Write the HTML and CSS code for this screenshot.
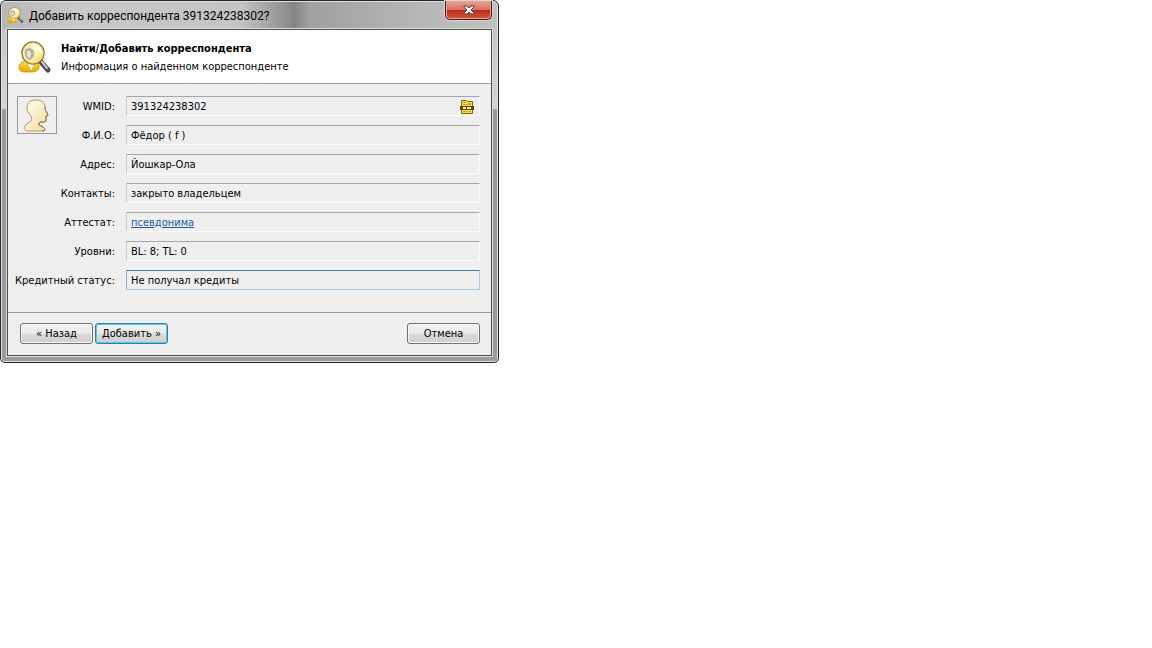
FILE: index.html
```html
<!DOCTYPE html>
<html lang="ru">
<head>
<meta charset="utf-8">
<title>Добавить корреспондента</title>
<link rel="stylesheet" href="styles.css">
</head>
<body>
<svg class="defs" width="0" height="0" aria-hidden="true">
  <defs>
    <linearGradient id="lens" x1="0" y1="0" x2="1" y2="1">
      <stop offset="0" stop-color="#e9dd92"/><stop offset=".45" stop-color="#fffbd8"/><stop offset="1" stop-color="#f1d23c"/>
    </linearGradient>
    <linearGradient id="gold" x1="0" y1="0" x2="0" y2="1">
      <stop offset="0" stop-color="#ffe66b"/><stop offset="1" stop-color="#e2a900"/>
    </linearGradient>
    <linearGradient id="cream" x1="0" y1="0" x2="1" y2="1">
      <stop offset="0" stop-color="#fffdf2"/><stop offset="1" stop-color="#f6dda0"/>
    </linearGradient>
    <symbol id="search-user" viewBox="0 0 34 34">
      <path d="M1 27c0-4 2-5 5-7l3-2h9c2 3 3 5 3 8 0 4-4 5-10 5S1 31 1 27z" fill="url(#gold)" stroke="#d39e0c"/>
      <path d="M10 22l3 7 4-6z" fill="#fffbe8"/>
      <path d="M23 21l7 8" stroke="#4e4e4e" stroke-width="5" stroke-linecap="round"/>
      <path d="M24 21l5 6" stroke="#c9c9c9" stroke-width="2" stroke-linecap="round"/>
      <circle cx="15" cy="12" r="11" fill="url(#lens)" stroke="#8e7930" stroke-width="1.5"/>
      <circle cx="15" cy="12" r="10" fill="none" stroke="#f5e58b"/>
      <path d="M7 9c3-3 8-2 9 1 1 4-1 8-5 9-3-1-5-5-4-10z" fill="#a3a38b" opacity=".8"/>
      <path d="M9 10c2-1 4 0 4 3 0 2-1 4-2 4-2-1-3-4-2-7z" fill="#e6e6d6"/>
      <path d="M14 4c5 0 8 3 9 7" fill="none" stroke="#fff" stroke-width="2" stroke-linecap="round"/>
    </symbol>
  </defs>
</svg>
<main class="window">
  <header class="titlebar">
    <svg class="title-icon" aria-hidden="true"><use href="#search-user"/></svg>
    <h1 class="title">Добавить корреспондента 391324238302?</h1>
    <button class="close" type="button" aria-label="Закрыть">
      <svg class="close-icon" viewBox="0 0 12 10" aria-hidden="true"><path d="M1 1h3l2 2 2-2h3v1L8 5l3 3v1H8L6 7 4 9H1V8l3-3-3-3z" fill="#fff" stroke="#5d3838"/></svg>
    </button>
  </header>
  <form class="client">
    <div class="banner">
      <svg class="banner-icon" aria-hidden="true"><use href="#search-user"/></svg>
      <div class="banner-text">
        <h2 class="heading">Найти/Добавить корреспондента</h2>
        <p class="subheading">Информация о найденном корреспонденте</p>
      </div>
    </div>
    <div class="details">
      <div class="avatar">
        <svg class="avatar-icon" viewBox="0 0 30 34" aria-hidden="true"><path d="M5 10C5 4 9 2 14 2s9 2 9 7c0 2 0 3 1 4l2 4c0 1-2 1-2 1v4c0 2-1 2-3 2h-2c-2 0-2 1-2 3l4 2c3 2 2 4-1 4H6c-4 0-4-3-3-5 1-3 5-3 6-5s1-4-1-6c-2-2-3-4-3-7z" fill="url(#cream)" stroke="#b39a63"/><path d="M23 9c0 2 0 3 1 4l2 4c0 1-2 1-2 1v4c0 2-1 2-3 2h-2c-2 0-2 1-2 3l4 2c3 2 2 4-1 4" fill="none" stroke="#83714a"/></svg>
      </div>
      <div class="fields">
        <label class="label" for="wmid">WMID:</label>
        <div class="field">
          <input class="value" id="wmid" type="text" value="391324238302" readonly>
          <button class="card" type="button" aria-label="Карточка">
            <svg class="card-icon" viewBox="0 0 16 16" aria-hidden="true">
              <path d="M2.500 1.500h5l1 1h5v12h-11z" fill="#f4dc45" stroke="#80680c"/>
              <path d="M4 3.500h3M9 4.500h3M4 5.500h8M4 12.500h4M9 12.500h3" stroke="#c0a62c"/>
              <path d="M1 7h14v4H1z" fill="#5e4808"/>
              <path d="M4 9h3M8 9h4" stroke="#fff0a0" stroke-width="2"/>
            </svg>
          </button>
        </div>
        <label class="label" for="name">Ф.И.О:</label>
        <div class="field"><input class="value" id="name" type="text" value="Фёдор ( f )" readonly></div>
        <label class="label" for="address">Адрес:</label>
        <div class="field"><input class="value" id="address" type="text" value="Йошкар-Ола" readonly></div>
        <label class="label" for="contacts">Контакты:</label>
        <div class="field"><input class="value" id="contacts" type="text" value="закрыто владельцем" readonly></div>
        <span class="label" id="passport-label">Аттестат:</span>
        <div class="field"><a class="link" href="#" aria-labelledby="passport-label passport" id="passport">псевдонима</a></div>
        <label class="label" for="levels">Уровни:</label>
        <div class="field"><input class="value" id="levels" type="text" value="BL: 8; TL: 0" readonly></div>
        <label class="label" for="credit">Кредитный статус:</label>
        <div class="field field-active"><input class="value" id="credit" type="text" value="Не получал кредиты" readonly></div>
      </div>
    </div>
    <div class="actions">
      <button class="button" type="button">« Назад</button>
      <button class="button button-default" type="submit">Добавить »</button>
      <button class="button button-cancel" type="button">Отмена</button>
    </div>
  </form>
</main>
</body>
</html>
```
FILE: styles.css
```css
* { box-sizing: border-box; }
body {
  margin: 0;
  background: #fff;
  color: #000;
  font: 11px/16px "DejaVu Sans Condensed", "DejaVu Sans", sans-serif;
}
h1, h2, p { margin: 0; }
.defs { display: block; }
button, input { font: inherit; color: inherit; }
.window {
  max-width: 499px;
  padding: 0 6px 6px;
  border: 1px solid #24282a;
  border-radius: 6px 6px 5px 5px;
  background: linear-gradient(#b5b5b5, #c8c5c5 30px, #d5d3d3 107px, #9a9898 109px, #9c9a9a);
  box-shadow: inset 0 0 0 1px #e2e2e2;
}
.titlebar {
  display: flex;
  align-items: center;
  height: 28px;
  margin: 0 -5px;
  padding: 0 5px;
  border-top: 1px solid #ddd;
  border-radius: 5px 5px 0 0;
  background: linear-gradient(90deg, #b7b7b7, #c9c9c9 15%, #c4c4c4 48%, #999 56%, #858585 59%, #a0a0a0 62%, #b7b7b7 85%, #c1c1c1);
}
.title-icon { width: 17px; height: 17px; margin-right: 5px; }
.title {
  flex: 1;
  font: 12px/16px Roboto, sans-serif;
}
.close {
  display: flex;
  align-self: flex-start;
  align-items: center;
  justify-content: center;
  width: 47px;
  height: 19px;
  margin-top: -1px;
  padding: 0;
  border: 1px solid #4c1914;
  border-top: 0;
  border-radius: 0 0 5px 5px;
  background: linear-gradient(#e6a595, #d57160 48%, #bd2b17 50%, #cf5640);
  box-shadow: inset 0 0 0 1px #e9a696, 0 0 0 1px #d5d5d5;
}
.close-icon { width: 12px; height: 10px; }
.client {
  border: 1px solid #4f4f4f;
  background: #efefef;
  box-shadow: 0 0 0 1px #dcdcdc;
}
.banner {
  display: flex;
  align-items: center;
  gap: 9px;
  padding: 10px 10px 8px;
  border-bottom: 1px solid #a6a6a6;
  background: #fff;
}
.banner-icon { width: 34px; height: 34px; }
.banner-text {
  display: grid;
  gap: 2px;
  padding-top: 1px;
}
.heading {
  font-size: 11px;
  line-height: 16px;
  font-weight: bold;
}
.details {
  position: relative;
  padding: 12px 11px 22px 8px;
}
.avatar {
  position: absolute;
  top: 12px;
  left: 9px;
  display: flex;
  align-items: center;
  justify-content: center;
  width: 40px;
  height: 38px;
  border: 1px solid #999;
}
.avatar-icon { width: 30px; height: 34px; }
.fields {
  display: grid;
  grid-template-columns: 99px 1fr;
  gap: 9px 11px;
  align-items: center;
}
.label {
  padding-top: 1px;
  text-align: right;
  white-space: nowrap;
  justify-self: end;
}
.field {
  display: flex;
  align-items: center;
  height: 20px;
  padding: 1px 4px 0;
  border: 1px solid;
  border-color: #a2a6ad #fafafa #fafafa #c9cdd2;
}
.field-active { border-color: #54788f #a9c8dc #a9c8dc #8fb1c6; }
.value {
  flex: 1;
  min-width: 0;
  padding: 0;
  border: 0;
  outline: 0;
  background: none;
}
.link { color: #1c57a8; }
.card {
  display: flex;
  padding: 0;
  border: 0;
  background: none;
}
.card-icon { width: 16px; height: 16px; }
.actions {
  display: flex;
  gap: 2px;
  padding: 10px 11px 11px 12px;
  border-top: 1px solid #999;
}
.button {
  width: 73px;
  height: 21px;
  padding: 1px 0 0;
  border: 1px solid #707070;
  border-radius: 3px;
  background: linear-gradient(#f3f3f3, #e9e9e9 50%, #d9d9d9 51%, #d0d0d0);
  box-shadow: inset 0 0 0 1px #f8f8f8;
  white-space: nowrap;
}
.button-default {
  border-color: #347f9f;
  box-shadow: inset 0 0 0 1px #55c6ec;
}
.button-cancel { margin-left: auto; }
```
